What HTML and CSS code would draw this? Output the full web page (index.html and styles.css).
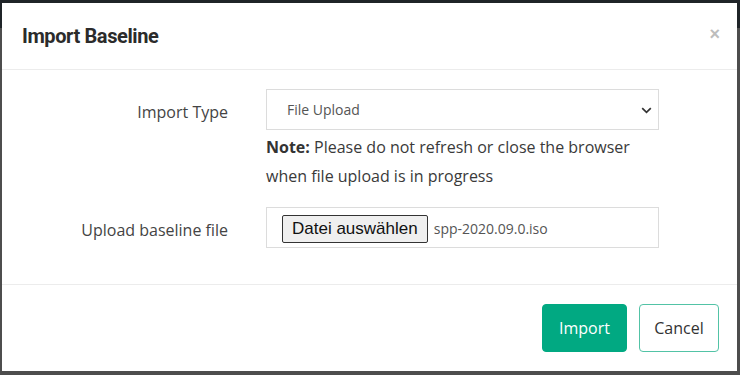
FILE: index.html
```html
<!DOCTYPE html>
<html>
<head>
<meta charset="utf-8">
<link rel="stylesheet" href="styles.css">
</head>
<body>
<div class="modal">
  <div class="modal-header">
    <h1 class="title">Import Baseline</h1>
    <span class="close">×</span>
  </div>
  <div class="modal-body">
    <div class="form-grid">
      <label class="label">Import Type</label>
      <div class="select">
        <span class="select-text">File Upload</span>
        <svg class="chevron" width="11" height="7" viewBox="0 0 11 7"><path d="M1.2 1.2 L5.5 5.4 L9.8 1.2" fill="none" stroke="#333" stroke-width="1.7"/></svg>
      </div>
      <div class="spacer"></div>
      <p class="note"><b>Note:</b> Please do not refresh or close the browser when file upload is in progress</p>
      <label class="label">Upload baseline file</label>
      <div class="file-box">
        <button class="file-btn">Datei auswählen</button>
        <span class="file-name">spp-2020.09.0.iso</span>
      </div>
    </div>
  </div>
  <div class="modal-footer">
    <button class="btn btn-primary">Import</button>
    <button class="btn btn-secondary">Cancel</button>
  </div>
</div>
</body>
</html>
```
FILE: styles.css
```css
html, body {
  margin: 0;
  padding: 0;
}
body {
  width: 740px;
  height: 375px;
  background: linear-gradient(#1f2428 0, #1f2428 28px, #4d4d4d 28px, #4d4d4d 100%);
  font-family: "Open Sans", "Noto Sans", sans-serif;
  overflow: hidden;
}
.modal {
  margin: 3px 3px 0 2px;
  height: 368px;
  background: #fff;
  display: flex;
  flex-direction: column;
}
.modal-header {
  height: 67px;
  border-bottom: 1px solid #ececec;
  display: flex;
  align-items: center;
  justify-content: space-between;
  padding: 0 17px 0 20px;
  box-sizing: border-box;
  flex: none;
}
.title {
  margin: 0;
  font-family: Roboto, "Liberation Sans", sans-serif;
  font-weight: 700;
  font-size: 20px;
  color: #2b2b2b;
  letter-spacing: -0.4px;
}
.close {
  color: #bdbdbd;
  font-size: 18px;
  font-weight: 700;
  font-family: "Liberation Sans", sans-serif;
  margin-top: -4px;
}
.modal-body {
  flex: 1;
  padding-top: 19px;
  box-sizing: border-box;
}
.form-grid {
  display: grid;
  grid-template-columns: 226px 393px;
  column-gap: 38px;
  align-items: center;
}
.label {
  text-align: right;
  font-size: 16px;
  color: #444;
  padding-top: 4px;
}
.select {
  height: 41px;
  box-sizing: border-box;
  border: 1px solid #dcdcdc;
  display: flex;
  align-items: center;
  justify-content: space-between;
  padding: 0 6px 0 20px;
  font-size: 14px;
  color: #555;
}
.chevron {
  margin-top: 1px;
}
.note {
  margin: 3px 0 16px;
  font-size: 16px;
  line-height: 29px;
  color: #3a3a3a;
}
.note b {
  color: #333;
}
.file-box {
  height: 41px;
  box-sizing: border-box;
  border: 1px solid #dcdcdc;
  display: flex;
  align-items: center;
  padding: 2px 0 0 15px;
}
.file-btn {
  height: 28px;
  box-sizing: border-box;
  font-family: "Liberation Sans", Arial, sans-serif;
  font-size: 17px;
  color: #111;
  background: #efefef;
  border: 1px solid #333;
  border-radius: 2px;
  padding: 0 9px 0 9px;
  margin: 0 6px 0 0;
}
.file-name {
  font-size: 14px;
  color: #555;
}
.modal-footer {
  height: 87px;
  box-sizing: border-box;
  border-top: 1px solid #ececec;
  display: flex;
  justify-content: flex-end;
  align-items: flex-start;
  gap: 12px;
  padding: 19px 18px 0 0;
  flex: none;
}
.btn {
  height: 48px;
  box-sizing: border-box;
  border-radius: 4px;
  font-family: "Open Sans", "Noto Sans", sans-serif;
  font-size: 16px;
}
.btn-primary {
  width: 85px;
  background: #01a982;
  border: 1px solid #01a982;
  color: #fff;
}
.btn-secondary {
  width: 80px;
  background: #fff;
  border: 1px solid #52c3a6;
  color: #333;
}
```
